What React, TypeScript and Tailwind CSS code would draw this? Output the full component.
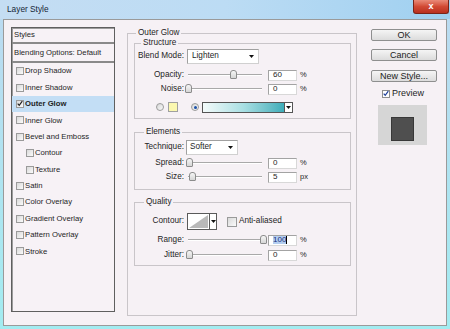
import React from "react";

function Check({ checked = false, size = "w-[8px] h-[8px]" }: { checked?: boolean; size?: string }) {
  return (
    <span className={`${size} shrink-0 border border-[#9a9a9a] bg-gradient-to-br from-[#d9d9d9] to-[#fbfbfb] flex items-center justify-center`}>
      {checked && (
        <svg width="7" height="7" viewBox="0 0 7 7">
          <path d="M0.8 3.6 L2.6 5.6 L6.2 0.8" fill="none" stroke="#1c1c1c" strokeWidth="1.3" />
        </svg>
      )}
    </span>
  );
}

function Arrow() {
  return (
    <svg width="5" height="3" viewBox="0 0 5 3">
      <path d="M0 0 L5 0 L2.5 3 Z" fill="#111" />
    </svg>
  );
}

function Radio({ on = false }: { on?: boolean }) {
  return (
    <span className="w-[8px] h-[8px] shrink-0 rounded-full border border-[#9b9b9b] bg-gradient-to-br from-[#d6d6d6] to-[#fbfbfb] flex items-center justify-center">
      {on && <span className="w-[3px] h-[3px] rounded-full bg-[#1a4fa8]" />}
    </span>
  );
}

function Slider({ thumb }: { thumb: string }) {
  return (
    <div className="relative w-[74px] h-[10px] ml-[4px] flex items-center">
      <div className="w-full h-[2px] border-t border-[#a9a9a9] border-b border-b-white" />
      <span className={`absolute top-[0px] ${thumb} w-[7px] h-[9px] rounded-t-[3px] rounded-b-[1px] border border-[#8c8c8c] bg-gradient-to-b from-[#f6f6f6] to-[#d6d6d6]`} />
    </div>
  );
}

function Input({ v, sel = false }: { v: string; sel?: boolean }) {
  return (
    <div className="ml-[6px] w-[29px] h-[11px] border border-[#a3a3a3] border-b-[#d8d8d8] border-r-[#d8d8d8] bg-white flex items-center pl-[4px] text-[8px] leading-none">
      {sel ? (
        <>
          <span className="bg-[#b3cdf0] text-[#1b2f78]">{v}</span>
          <span className="w-px h-[8px] bg-black" />
        </>
      ) : (
        <span>{v}</span>
      )}
    </div>
  );
}

function SliderRow({ label, thumb, v, unit, sel = false, mt = "" }: { label: string; thumb: string; v: string; unit: string; sel?: boolean; mt?: string }) {
  return (
    <div className={`h-[14px] flex items-center ${mt}`}>
      <span className="w-[49px] text-right leading-none">{label}</span>
      <Slider thumb={thumb} />
      <Input v={v} sel={sel} />
      <span className="ml-[3px] leading-none text-[7.5px]">{unit}</span>
    </div>
  );
}

function Legend({ children, ml }: { children: React.ReactNode; ml: string }) {
  return <legend className={`${ml} px-[2px] leading-[10px] text-[8.2px]`}>{children}</legend>;
}

function Button({ children, mt }: { children: React.ReactNode; mt: string }) {
  return (
    <div className={`${mt} w-[66px] h-[12px] rounded-[2px] border border-[#8e8f8f] bg-gradient-to-b from-[#f5f5f5] to-[#dcdcdc] flex items-center justify-center text-[9px] leading-none text-[#222]`}>
      {children}
    </div>
  );
}

const items: { t: string; sel?: boolean; ind?: boolean; chk?: boolean }[] = [
  { t: "Drop Shadow" },
  { t: "Inner Shadow" },
  { t: "Outer Glow", sel: true, chk: true },
  { t: "Inner Glow" },
  { t: "Bevel and Emboss" },
  { t: "Contour", ind: true },
  { t: "Texture", ind: true },
  { t: "Satin" },
  { t: "Color Overlay" },
  { t: "Gradient Overlay" },
  { t: "Pattern Overlay" },
  { t: "Stroke" },
];

export default function App() {
  return (
    <div className="w-[450px] h-[329px] flex flex-col bg-gradient-to-b from-[#bcdaf1] to-[#a2ecf1] font-['Liberation_Sans',Arial,sans-serif] text-[#1e1e1e] overflow-hidden">
      {/* title bar */}
      <div className="h-[19px] shrink-0 flex items-start justify-between bg-gradient-to-r from-[#c4ddf3] via-[#bcdcf4] to-[#9fd0f0]">
        <span className="ml-[7px] mt-[4px] text-[8.3px] leading-[10px] text-[#152536]">Layer Style</span>
        <div className="mr-[1px] w-[36px] h-[14px] rounded-b-[3px] border border-t-0 border-[#7a2418] bg-gradient-to-b from-[#e98a78] via-[#d24a34] to-[#b8301f] flex items-center justify-center">
          <span className="text-white text-[9px] font-bold leading-none">x</span>
        </div>
      </div>

      {/* content */}
      <div className="flex-1 mx-[3px] mb-[3px] border border-[#9a9a9a] bg-[#f6f1f5] flex items-start pl-[7px] pt-[7px]">
        {/* left list */}
        <div className="w-[104px] h-[285px] shrink-0 border border-[#5f5f5f] shadow-[inset_1px_1px_0_#9c9c9c] bg-[#f7f2f6] text-[7.7px] flex flex-col">
          <div className="h-[16px] shrink-0 flex items-center pl-[2px] border-b-2 border-[#8a8a8a] leading-none">Styles</div>
          <div className="h-[19px] shrink-0 flex items-center pl-[2px] border-b-2 border-[#8a8a8a] leading-none">Blending Options: Default</div>
          {items.map((it) => (
            <div
              key={it.t}
              className={`h-[16.4px] shrink-0 flex items-center gap-[1px] ${it.ind ? "pl-[14px]" : "pl-[4px]"} ${it.sel ? "bg-[#c3def5] font-bold" : ""}`}
            >
              <Check checked={it.chk} />
              <span className="leading-none">{it.t}</span>
            </div>
          ))}
        </div>

        {/* middle */}
        <fieldset className="ml-[12px] mt-[1px] w-[230px] h-[288px] shrink-0 border border-[#c9c5c9] text-[8.2px]">
          <Legend ml="ml-[8px]">Outer Glow</Legend>

          {/* Structure */}
          <fieldset className="ml-[6px] w-[217px] border border-[#c9c5c9] pb-[4px]">
            <Legend ml="ml-[6px]">Structure</Legend>
            <div className="mt-[1px] h-[15px] flex items-center">
              <span className="w-[49px] text-right leading-none">Blend Mode:</span>
              <div className="ml-[3px] w-[72px] h-[15px] border border-[#a0a0a0] border-b-[#d0d0d0] border-r-[#d0d0d0] bg-white flex items-center justify-between pl-[4px] pr-[4px]">
                <span className="leading-none">Lighten</span>
                <Arrow />
              </div>
            </div>
            <SliderRow mt="mt-[4px]" label="Opacity:" thumb="left-[42px]" v="60" unit="%" />
            <SliderRow label="Noise:" thumb="left-[-3px]" v="0" unit="%" />
            <div className="mt-[4px] h-[14px] flex items-center">
              <span className="ml-[21px]"><Radio /></span>
              <span className="ml-[4px] w-[10px] h-[10px] border border-[#a0a0a0] bg-[#fbf8b0]" />
              <span className="ml-[13px]"><Radio on /></span>
              <div className="ml-[3px] w-[91px] h-[11px] border border-[#555] flex">
                <div className="flex-1 bg-gradient-to-r from-[#f4fbfb] via-[#a8dfe3] to-[#3cadb9]" />
                <div className="w-[8px] border-l border-[#555] bg-white flex items-center justify-center">
                  <Arrow />
                </div>
              </div>
            </div>
          </fieldset>

          {/* Elements */}
          <fieldset className="ml-[6px] mt-[8px] w-[217px] border border-[#c9c5c9] pb-[5px]">
            <Legend ml="ml-[9px]">Elements</Legend>
            <div className="mt-[3px] h-[15px] flex items-center">
              <span className="w-[49px] text-right leading-none">Technique:</span>
              <div className="ml-[2px] w-[52px] h-[15px] border border-[#a0a0a0] border-b-[#d0d0d0] border-r-[#d0d0d0] bg-white flex items-center justify-between pl-[3px] pr-[4px]">
                <span className="leading-none">Softer</span>
                <Arrow />
              </div>
            </div>
            <SliderRow mt="mt-[1px]" label="Spread:" thumb="left-[-2px]" v="0" unit="%" />
            <SliderRow label="Size:" thumb="left-[1px]" v="5" unit="px" />
          </fieldset>

          {/* Quality */}
          <fieldset className="ml-[6px] mt-[7px] w-[217px] border border-[#c9c5c9] pb-[3px]">
            <Legend ml="ml-[9px]">Quality</Legend>
            <div className="mt-[6px] h-[17px] flex items-center">
              <span className="w-[49px] text-right leading-none">Contour:</span>
              <div className="ml-[3px] w-[30px] h-[17px] border border-[#5a5a5a] bg-white flex">
                <svg width="21" height="15" viewBox="0 0 21 15" className="shrink-0">
                  <polygon points="1,14 20,1 20,14" fill="#b9b9b9" />
                </svg>
                <div className="flex-1 border-l border-[#5a5a5a] flex items-center justify-center">
                  <Arrow />
                </div>
              </div>
              <span className="ml-[10px]">
                <Check size="w-[10px] h-[10px]" />
              </span>
              <span className="ml-[2px] leading-none">Anti-aliased</span>
            </div>
            <SliderRow mt="mt-[3px]" label="Range:" thumb="left-[72px]" v="100" unit="%" sel />
            <SliderRow mt="mt-[1px]" label="Jitter:" thumb="left-[-2px]" v="0" unit="%" />
          </fieldset>
        </fieldset>

        {/* right column */}
        <div className="ml-[14px] flex flex-col">
          <Button mt="mt-[2px]">OK</Button>
          <Button mt="mt-[8px]">Cancel</Button>
          <Button mt="mt-[9px]">New Style...</Button>
          <div className="mt-[7px] ml-[11px] h-[9px] flex items-center gap-[2px]">
            <span className="w-[8px] h-[8px] border border-[#8e8e8e] bg-white flex items-center justify-center">
              <svg width="7" height="7" viewBox="0 0 7 7">
                <path d="M0.8 3.6 L2.6 5.6 L6.2 0.8" fill="none" stroke="#1d3d9a" strokeWidth="1.4" />
              </svg>
            </span>
            <span className="text-[9px] leading-none">Preview</span>
          </div>
          <div className="mt-[7px] ml-[7px] w-[49px] h-[40px] bg-[#d6d6d6] flex items-center justify-center pt-[7px]">
            <div className="w-[23px] h-[24px] bg-[#4f4f4f] border border-[#383838]" />
          </div>
        </div>
      </div>
    </div>
  );
}
